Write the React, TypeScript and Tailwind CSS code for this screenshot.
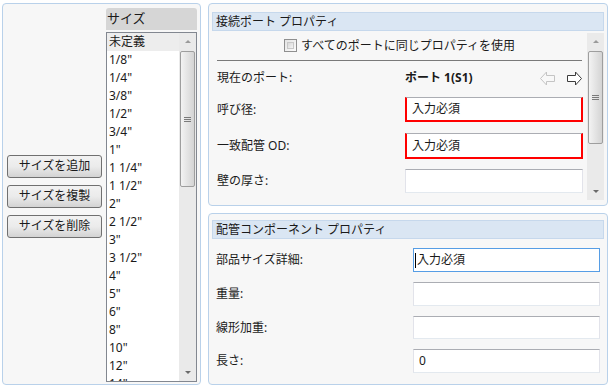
import React from 'react';

const sizes = [
  '未定義',
  '1/8"',
  '1/4"',
  '3/8"',
  '1/2"',
  '3/4"',
  '1"',
  '1 1/4"',
  '1 1/2"',
  '2"',
  '2 1/2"',
  '3"',
  '3 1/2"',
  '4"',
  '5"',
  '6"',
  '8"',
  '10"',
  '12"',
  '14"',
];

const font = { fontFamily: '"Noto Sans", "Noto Sans CJK JP", sans-serif' };

const Arrow = ({ dir, disabled }: { dir: 'left' | 'right'; disabled?: boolean }) => (
  <svg width="17" height="15" viewBox="0 0 17 15">
    <polygon
      points="1.5,4.5 9.5,4.5 9.5,1 15.5,7.5 9.5,14 9.5,10.5 1.5,10.5"
      fill={disabled ? '#f8f8f8' : '#ffffff'}
      stroke={disabled ? '#c4c4c4' : '#3c3c3c'}
      strokeWidth="1"
      transform={dir === 'left' ? 'translate(17,0) scale(-1,1)' : undefined}
    />
  </svg>
);

const ScrollBar = ({ thumbTop, thumbHeight }: { thumbTop: number; thumbHeight: number }) => (
  <div className="relative flex w-[17px] shrink-0 flex-col bg-[#eaeaea]">
    <div className="flex h-[17px] items-center justify-center">
      <div className="h-0 w-0 border-x-[3px] border-b-[3px] border-x-transparent border-b-[#9a9a9a]" />
    </div>
    <div
      className="absolute left-[1px] flex w-[15px] items-center justify-center rounded-[2px] border border-[#9e9e9e] bg-gradient-to-r from-[#f3f3f3] to-[#d4d4d4]"
      style={{ top: thumbTop, height: thumbHeight }}
    >
      <div className="flex flex-col gap-[1px]">
        <div className="h-[1px] w-[7px] bg-[#7a7a7a]" />
        <div className="h-[1px] w-[7px] bg-[#7a7a7a]" />
        <div className="h-[1px] w-[7px] bg-[#7a7a7a]" />
      </div>
    </div>
    <div className="flex-1" />
    <div className="flex h-[17px] items-center justify-center">
      <div className="h-0 w-0 border-x-[3px] border-t-[3px] border-x-transparent border-t-[#6a6a6a]" />
    </div>
  </div>
);

const SideButton = ({ label }: { label: string }) => (
  <button
    type="button"
    className="h-[23px] w-[95px] rounded-[3px] border border-[#707070] bg-gradient-to-b from-[#f2f2f2] via-[#ebebeb] to-[#d3d3d3] text-[12px] leading-none text-[#1a1a1a]"
  >
    {label}
  </button>
);

const TextBox = ({
  value,
  required,
  focused,
  className,
}: {
  value?: string;
  required?: boolean;
  focused?: boolean;
  className: string;
}) => {
  let border = 'border border-[#abadb3] border-x-[#e2e3ea] border-b-[#e3e9ef]';
  if (required) border = 'border-x-2 border-b-2 border-t border-[#ff0000] border-t-[#abadb3]';
  if (focused) border = 'border border-[#569de5]';
  return (
    <div className={`flex items-center bg-white text-[12px] text-[#1a1a1a] ${border} ${className}`}>
      {focused && <div className="ml-[1px] h-[15px] w-[1px] bg-black" />}
      <span className={focused ? 'pl-[1px]' : 'pl-[5px]'}>{value}</span>
    </div>
  );
};

const Header = ({ title }: { title: string }) => (
  <div className="mx-[3px] flex h-[19px] items-center border border-[#c6d8ec] bg-[#dae6f3] pl-[3px] text-[12px] text-[#1a1a1a]">
    {title}
  </div>
);

export default function App() {
  return (
    <div className="flex h-[387px] w-[611px] gap-[7px] bg-white pl-[2px] pt-[3px] pb-[2px]" style={font}>
      {/* left panel */}
      <div className="flex w-[199px] rounded-[4px] border border-[#b9d1ea] bg-[#f7f7f7] pl-[4px] pr-[2px] pt-[4px]">
        <div className="flex w-[95px] flex-col justify-center gap-[7px]">
          <SideButton label="サイズを追加" />
          <SideButton label="サイズを複製" />
          <SideButton label="サイズを削除" />
        </div>
        <div className="ml-[4px] flex w-[91px] flex-col">
          <div className="flex h-[22px] items-center rounded-t-[3px] bg-[#d6d6d6] pl-[1px] text-[13px] text-[#1a1a1a]">
            サイズ
          </div>
          <div className="mt-[2px] flex h-[350px] overflow-hidden border border-[#828790] bg-white">
            <div className="flex-1 overflow-hidden text-[12px] text-[#1a1a1a]">
              {sizes.map((s, i) => (
                <div
                  key={s}
                  className={`flex h-[18px] shrink-0 items-center pl-[2px] ${i === 0 ? 'bg-[#ededed]' : ''}`}
                >
                  {s}
                </div>
              ))}
            </div>
            <ScrollBar thumbTop={18} thumbHeight={136} />
          </div>
        </div>
      </div>

      {/* right column */}
      <div className="flex w-[400px] flex-col gap-[7px]">
        <div className="flex h-[203px] flex-col rounded-[4px] border border-[#b9d1ea] bg-[#f7f7f7] pt-[8px]">
          <Header title="接続ポート プロパティ" />
          <div className="mx-[3px] mt-[2px] flex h-[167px]">
            <div className="relative flex-1 text-[12px] text-[#1a1a1a]">
              <div className="flex h-[25px] items-center justify-center gap-[4px]">
                <div className="h-[13px] w-[13px] border border-[#8f8f8f] bg-gradient-to-br from-[#e4e4e4] to-[#fbfbfb] p-[2px]">
                  <div className="h-full w-full border border-[#c8c8c8] bg-gradient-to-br from-[#d8d8d8] to-[#f4f4f4]" />
                </div>
                <span>すべてのポートに同じプロパティを使用</span>
              </div>
              <div className="mx-[5px] mt-[2px] h-[1px] bg-[#7a7a7a]" />
              <div className="mt-[6px] flex h-[22px] items-center pl-[5px] pr-[4px]">
                <span className="w-[188px]">現在のポート:</span>
                <span className="flex-1 font-bold">ポート 1(S1)</span>
                <div className="flex items-center gap-[10px]">
                  <Arrow dir="left" disabled />
                  <Arrow dir="right" />
                </div>
              </div>
              <div className="mt-[8px] flex h-[25px] items-center pl-[5px]">
                <span className="w-[188px]">呼び径:</span>
                <TextBox value="入力必須" required className="h-[25px] w-[178px]" />
              </div>
              <div className="mt-[11px] flex h-[26px] items-center pl-[5px]">
                <span className="w-[188px]">一致配管 OD:</span>
                <TextBox value="入力必須" required className="h-[26px] w-[178px]" />
              </div>
              <div className="mt-[10px] flex h-[24px] items-center pl-[5px]">
                <span className="w-[188px]">壁の厚さ:</span>
                <TextBox className="h-[24px] w-[178px]" />
              </div>
            </div>
            <ScrollBar thumbTop={18} thumbHeight={93} />
          </div>
        </div>

        <div className="flex h-[172px] flex-col rounded-[4px] border border-[#b9d1ea] bg-[#f7f7f7] pt-[6px]">
          <Header title="配管コンポーネント プロパティ" />
          <div className="flex flex-col gap-[10px] pt-[9px] pl-[7px] text-[12px] text-[#1a1a1a]">
            <div className="flex h-[24px] items-center">
              <span className="w-[197px]">部品サイズ詳細:</span>
              <TextBox value="入力必須" focused className="h-[24px] w-[187px]" />
            </div>
            <div className="flex h-[24px] items-center">
              <span className="w-[197px]">重量:</span>
              <TextBox className="h-[24px] w-[187px]" />
            </div>
            <div className="flex h-[23px] items-center">
              <span className="w-[197px]">線形加重:</span>
              <TextBox className="h-[23px] w-[187px]" />
            </div>
            <div className="flex h-[24px] items-center">
              <span className="w-[197px]">長さ:</span>
              <TextBox value="0" className="h-[24px] w-[187px]" />
            </div>
          </div>
        </div>
      </div>
    </div>
  );
}
